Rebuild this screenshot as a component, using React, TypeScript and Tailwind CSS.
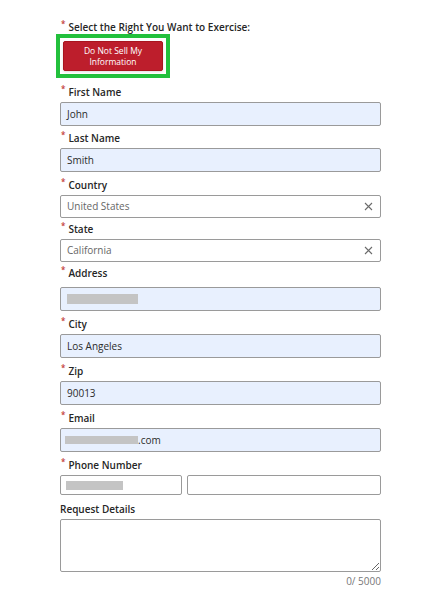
import type { ReactNode } from "react";

const font = { fontFamily: '"Open Sans", "Liberation Sans", sans-serif' };

function Label({ children, required = true, className = "" }: { children: ReactNode; required?: boolean; className?: string }) {
  return (
    <div className={`flex items-center text-[10px] font-semibold text-[#262626] ${className}`}>
      {required && (
        <span className="mr-[3px] -mt-[6px] ml-[1px] text-[8px] leading-none text-[#c23934]">*</span>
      )}
      <span>{children}</span>
    </div>
  );
}

function Field({
  value,
  filled = true,
  className = "",
  children,
}: {
  value?: string;
  filled?: boolean;
  className?: string;
  children?: ReactNode;
}) {
  return (
    <div
      className={`flex items-center rounded-[2px] border border-[#9a9a9a] text-[10px] ${
        filled ? "bg-[#e8f0fe]" : "bg-white"
      } ${className}`}
    >
      {value}
      {children}
    </div>
  );
}

function Redacted({ className }: { className: string }) {
  return <span className={`inline-block bg-[#c4c4c4] ${className}`} />;
}

function ClearIcon() {
  return (
    <svg width="9" height="9" viewBox="0 0 9 9" className="ml-auto mr-[1px]">
      <path d="M1 1 L8 8 M8 1 L1 8" stroke="#6b6b6b" strokeWidth="1.1" />
    </svg>
  );
}

export default function App() {
  return (
    <div className="min-h-[594px] w-[447px] bg-white" style={font}>
      <div className="ml-[60px] w-[321px] pt-[20px]">
        <Label className="h-[14px] leading-[14px]">Select the Right You Want to Exercise:</Label>

        <div className="-ml-[4px] w-[114px] border-[4px] border-[#22c03c] p-[3px]">
          <button className="flex h-[30px] w-[100px] flex-col items-center justify-center rounded-[2px] border border-[#a8151f] bg-[#bd1e2c] text-[8.5px] leading-[11px] text-white shadow-sm">
            <span>Do Not Sell My</span>
            <span>Information</span>
          </button>
        </div>

        <Label className="mt-[6px] h-[16px] leading-[16px]">First Name</Label>
        <Field value="John" className="mt-[2px] h-[24px] px-[6px] text-[#2b2b2b]" />

        <Label className="mt-[4px] h-[16px] leading-[16px]">Last Name</Label>
        <Field value="Smith" className="mt-[2px] h-[24px] px-[6px] text-[#2b2b2b]" />

        <Label className="mt-[5px] h-[16px] leading-[16px]">Country</Label>
        <Field filled={false} className="mt-[2px] h-[23px] px-[6px] text-[#666]">
          United States
          <ClearIcon />
        </Field>

        <Label className="mt-[3px] h-[16px] leading-[16px]">State</Label>
        <Field filled={false} className="mt-[2px] h-[23px] px-[6px] text-[#666]">
          California
          <ClearIcon />
        </Field>

        <Label className="mt-[3px] h-[16px] leading-[16px]">Address</Label>
        <Field className="mt-[6px] h-[24px] px-[6px]">
          <Redacted className="h-[10px] w-[71px]" />
        </Field>

        <Label className="mt-[5px] h-[16px] leading-[16px]">City</Label>
        <Field value="Los Angeles" className="mt-[2px] h-[24px] px-[6px] text-[#2b2b2b]" />

        <Label className="mt-[5px] h-[16px] leading-[16px]">Zip</Label>
        <Field value="90013" className="mt-[2px] h-[24px] px-[6px] text-[#2b2b2b]" />

        <Label className="mt-[5px] h-[16px] leading-[16px]">Email</Label>
        <Field className="mt-[2px] h-[24px] px-[4px] text-[#2b2b2b]">
          <Redacted className="h-[8px] w-[73px]" />
          <span>.com</span>
        </Field>

        <Label className="mt-[5px] h-[16px] leading-[16px]">Phone Number</Label>
        <div className="mt-[2px] flex gap-[5px]">
          <Field filled={false} className="h-[20px] w-[122px] px-[5px]">
            <Redacted className="h-[9px] w-[57px]" />
          </Field>
          <Field filled={false} className="h-[20px] flex-1" />
        </div>

        <Label required={false} className="mt-[6px] h-[16px] leading-[16px]">Request Details</Label>
        <textarea
          className="mt-[2px] block h-[53px] w-full resize-y rounded-[2px] border border-[#9a9a9a] bg-white px-[6px] py-[3px] text-[10px] outline-none"
          style={font}
        />
        <div className="mt-[3px] text-right text-[10px] leading-[12px] text-[#777]">0/ 5000</div>
      </div>
    </div>
  );
}
